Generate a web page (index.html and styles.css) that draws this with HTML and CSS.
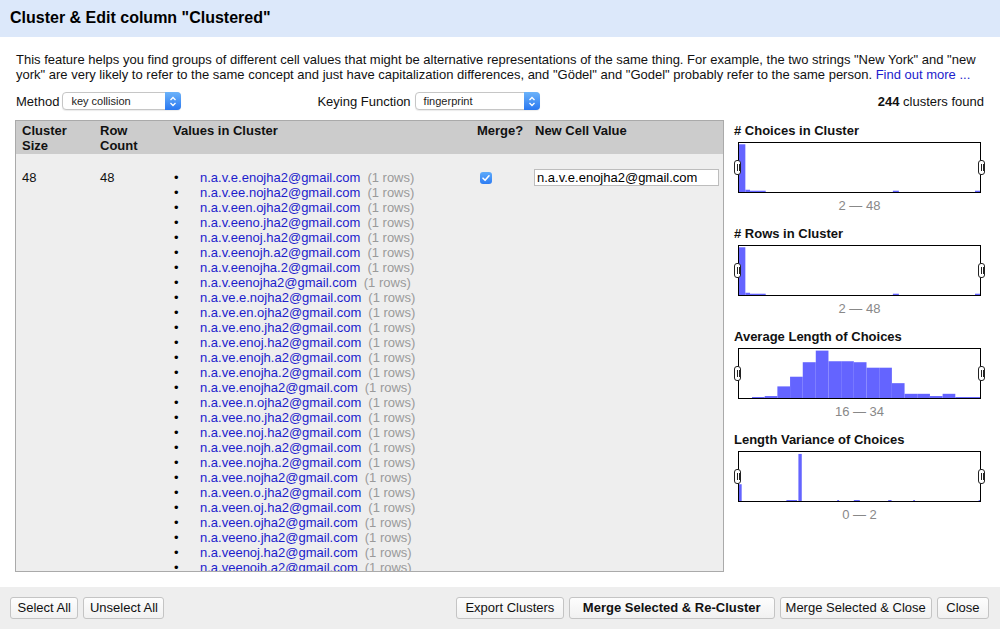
FILE: index.html
```html
<!DOCTYPE html>
<html>
<head>
<meta charset="utf-8">
<link rel="stylesheet" href="styles.css">
</head>
<body>
<div class="dialog">
  <div class="header">Cluster &amp; Edit column "Clustered"</div>
  <div class="body">
    <p class="desc">This feature helps you find groups of different cell values that might be alternative representations of the same thing. For example, the two strings "New York" and "new york" are very likely to refer to the same concept and just have capitalization differences, and "Gödel" and "Godel" probably refer to the same person. <a class="link">Find out more ...</a></p>
    <div class="controls">
      <span class="ctl-label">Method</span>
      <div class="select sel-method">key collision<span class="stepper"><svg width="8" height="11" viewBox="0 0 8 11"><path d="M1.5 4 L4 1.5 L6.5 4 M1.5 7 L4 9.5 L6.5 7" fill="none" stroke="#fff" stroke-width="1.3"/></svg></span></div>
      <span class="ctl-label keying">Keying Function</span>
      <div class="select sel-key">fingerprint<span class="stepper"><svg width="8" height="11" viewBox="0 0 8 11"><path d="M1.5 4 L4 1.5 L6.5 4 M1.5 7 L4 9.5 L6.5 7" fill="none" stroke="#fff" stroke-width="1.3"/></svg></span></div>
      <div class="found"><b>244</b> clusters found</div>
    </div>
    <div class="main">
      <div class="table">
        <div class="grid thead">
          <div class="cell">Cluster<br>Size</div>
          <div class="cell">Row<br>Count</div>
          <div class="cell">Values in Cluster</div>
          <div class="cell">Merge?</div>
          <div class="cell">New Cell Value</div>
        </div>
        <div class="tbody">
          <div class="grid trow">
            <div class="cell">48</div>
            <div class="cell">48</div>
            <div class="cell">
              <ul class="values">
                <li><a class="link">n.a.v.e.enojha2@gmail.com</a><span class="cnt">(1 rows)</span></li>
                <li><a class="link">n.a.v.ee.nojha2@gmail.com</a><span class="cnt">(1 rows)</span></li>
                <li><a class="link">n.a.v.een.ojha2@gmail.com</a><span class="cnt">(1 rows)</span></li>
                <li><a class="link">n.a.v.eeno.jha2@gmail.com</a><span class="cnt">(1 rows)</span></li>
                <li><a class="link">n.a.v.eenoj.ha2@gmail.com</a><span class="cnt">(1 rows)</span></li>
                <li><a class="link">n.a.v.eenojh.a2@gmail.com</a><span class="cnt">(1 rows)</span></li>
                <li><a class="link">n.a.v.eenojha.2@gmail.com</a><span class="cnt">(1 rows)</span></li>
                <li><a class="link">n.a.v.eenojha2@gmail.com</a><span class="cnt">(1 rows)</span></li>
                <li><a class="link">n.a.ve.e.nojha2@gmail.com</a><span class="cnt">(1 rows)</span></li>
                <li><a class="link">n.a.ve.en.ojha2@gmail.com</a><span class="cnt">(1 rows)</span></li>
                <li><a class="link">n.a.ve.eno.jha2@gmail.com</a><span class="cnt">(1 rows)</span></li>
                <li><a class="link">n.a.ve.enoj.ha2@gmail.com</a><span class="cnt">(1 rows)</span></li>
                <li><a class="link">n.a.ve.enojh.a2@gmail.com</a><span class="cnt">(1 rows)</span></li>
                <li><a class="link">n.a.ve.enojha.2@gmail.com</a><span class="cnt">(1 rows)</span></li>
                <li><a class="link">n.a.ve.enojha2@gmail.com</a><span class="cnt">(1 rows)</span></li>
                <li><a class="link">n.a.vee.n.ojha2@gmail.com</a><span class="cnt">(1 rows)</span></li>
                <li><a class="link">n.a.vee.no.jha2@gmail.com</a><span class="cnt">(1 rows)</span></li>
                <li><a class="link">n.a.vee.noj.ha2@gmail.com</a><span class="cnt">(1 rows)</span></li>
                <li><a class="link">n.a.vee.nojh.a2@gmail.com</a><span class="cnt">(1 rows)</span></li>
                <li><a class="link">n.a.vee.nojha.2@gmail.com</a><span class="cnt">(1 rows)</span></li>
                <li><a class="link">n.a.vee.nojha2@gmail.com</a><span class="cnt">(1 rows)</span></li>
                <li><a class="link">n.a.veen.o.jha2@gmail.com</a><span class="cnt">(1 rows)</span></li>
                <li><a class="link">n.a.veen.oj.ha2@gmail.com</a><span class="cnt">(1 rows)</span></li>
                <li><a class="link">n.a.veen.ojha2@gmail.com</a><span class="cnt">(1 rows)</span></li>
                <li><a class="link">n.a.veeno.jha2@gmail.com</a><span class="cnt">(1 rows)</span></li>
                <li><a class="link">n.a.veenoj.ha2@gmail.com</a><span class="cnt">(1 rows)</span></li>
                <li><a class="link">n.a.veenojh.a2@gmail.com</a><span class="cnt">(1 rows)</span></li>
                <li><a class="link">n.a.veenojha.2@gmail.com</a><span class="cnt">(1 rows)</span></li>
                <li><a class="link">n.a.veenojha2@gmail.com</a><span class="cnt">(1 rows)</span></li>
                <li><a class="link">n.av.e.e.nojha2@gmail.com</a><span class="cnt">(1 rows)</span></li>
              </ul>
            </div>
            <div class="cell"><span class="check"><svg width="12" height="12" viewBox="0 0 12 12"><path d="M3 6.2 L5.1 8.3 L9 3.8" fill="none" stroke="#fff" stroke-width="1.6" stroke-linecap="round" stroke-linejoin="round"/></svg></span></div>
            <div class="cell cell-input"><div class="input">n.a.v.e.enojha2@gmail.com</div></div>
          </div>
        </div>
      </div>
      <div class="facets">
        <div class="facet">
          <div class="facet-title"># Choices in Cluster</div>
          <div class="hist">
            <svg class="hist-svg" viewBox="0 0 722 152" preserveAspectRatio="none">
              <rect x="0" y="4" width="19" height="148"/>
              <rect x="19" y="145" width="14" height="7"/>
              <rect x="33" y="148" width="47" height="4"/>
              <rect x="461" y="148" width="18" height="4"/>
              <rect x="707" y="148" width="15" height="4"/>
            </svg>
            <span class="handle left"></span><span class="handle right"></span>
          </div>
          <div class="range">2 — 48</div>
        </div>
        <div class="facet">
          <div class="facet-title"># Rows in Cluster</div>
          <div class="hist">
            <svg class="hist-svg" viewBox="0 0 722 152" preserveAspectRatio="none">
              <rect x="0" y="4" width="19" height="148"/>
              <rect x="19" y="145" width="14" height="7"/>
              <rect x="33" y="148" width="47" height="4"/>
              <rect x="461" y="148" width="18" height="4"/>
              <rect x="707" y="148" width="15" height="4"/>
            </svg>
            <span class="handle left"></span><span class="handle right"></span>
          </div>
          <div class="range">2 — 48</div>
        </div>
        <div class="facet">
          <div class="facet-title">Average Length of Choices</div>
          <div class="hist">
            <svg class="hist-svg" viewBox="0 0 722 152" preserveAspectRatio="none">
              <rect x="39" y="149" width="38" height="3"/>
              <rect x="77" y="146" width="38" height="6"/>
              <rect x="115" y="116" width="38" height="36"/>
              <rect x="153" y="86" width="38" height="66"/>
              <rect x="191" y="41" width="39" height="111"/>
              <rect x="230" y="5" width="38" height="147"/>
              <rect x="268" y="38" width="38" height="114"/>
              <rect x="306" y="38" width="38" height="114"/>
              <rect x="344" y="41" width="38" height="111"/>
              <rect x="382" y="58" width="38" height="94"/>
              <rect x="420" y="58" width="38" height="94"/>
              <rect x="458" y="106" width="38" height="46"/>
              <rect x="496" y="139" width="38" height="13"/>
              <rect x="534" y="139" width="38" height="13"/>
              <rect x="572" y="146" width="38" height="6"/>
              <rect x="610" y="139" width="38" height="13"/>
              <rect x="648" y="149" width="38" height="3"/>
              <rect x="686" y="149" width="36" height="3"/>
            </svg>
            <span class="handle left"></span><span class="handle right"></span>
          </div>
          <div class="range">16 — 34</div>
        </div>
        <div class="facet">
          <div class="facet-title">Length Variance of Choices</div>
          <div class="hist">
            <svg class="hist-svg" viewBox="0 0 722 152" preserveAspectRatio="none">
              <rect x="0" y="100" width="8" height="52"/>
              <rect x="142" y="149" width="32" height="3"/>
              <rect x="178" y="6" width="10" height="146"/>
              <rect x="294" y="149" width="6" height="3"/>
              <rect x="344" y="149" width="18" height="3"/>
              <rect x="447" y="149" width="10" height="3"/>
              <rect x="522" y="149" width="5" height="3"/>
              <rect x="718" y="149" width="4" height="3"/>
            </svg>
            <span class="handle left"></span><span class="handle right"></span>
          </div>
          <div class="range">0 — 2</div>
        </div>
      </div>
    </div>
  </div>
  <div class="footer">
    <div class="btn-group">
      <button class="btn b-select">Select All</button>
      <button class="btn b-unselect">Unselect All</button>
    </div>
    <div class="btn-group">
      <button class="btn b-export">Export Clusters</button>
      <button class="btn primary">Merge Selected &amp; Re-Cluster</button>
      <button class="btn">Merge Selected &amp; Close</button>
      <button class="btn close">Close</button>
    </div>
  </div>
</div>
</body>
</html>
```

FILE: styles.css
```css
* { box-sizing: border-box; }
html, body { margin: 0; padding: 0; background: #fff; }
body {
  font-family: "Liberation Sans", Arial, sans-serif;
  font-size: 13px;
  color: #111;
  width: 1000px;
  height: 629px;
  overflow: hidden;
}
.dialog { width: 1000px; height: 629px; display: flex; flex-direction: column; }
.header {
  height: 37px;
  background: #dce8fa;
  font-size: 16px;
  font-weight: bold;
  padding: 9px 0 0 10px;
  line-height: 18px;
  color: #000;
}
.body { flex: 1; padding: 0 16px 0 15px; display: flex; flex-direction: column; }
.desc {
  margin: 15px 0 0 1px;
  line-height: 15px;
  color: #111;
}
.link { color: #1c1ccc; text-decoration: none; }
.controls {
  margin-top: 10px;
  height: 18px;
  display: flex;
  align-items: center;
  padding-left: 1px;
}
.ctl-label { margin-right: 3px; }
.ctl-label.keying { margin-left: 136px; margin-right: 4px; }
.select {
  position: relative;
  height: 18px;
  border: 1px solid #c6c6c6;
  border-radius: 4px;
  background: #fff;
  font-size: 11px;
  line-height: 16px;
  padding-left: 8px;
  color: #222;
  box-shadow: 0 1px 1px rgba(0,0,0,0.08);
}
.sel-method { width: 119px; }
.sel-key { width: 125px; }
.stepper {
  position: absolute;
  right: -1px;
  top: -1px;
  width: 16px;
  height: 18px;
  border-radius: 0 4px 4px 0;
  background: linear-gradient(#6cb3fa, #2a78f0);
  display: flex;
  align-items: center;
  justify-content: center;
}
.stepper svg { display: block; }
.found { margin-left: auto; }
.main {
  margin-top: 10px;
  height: 452px;
  display: flex;
}
.table {
  width: 710px;
  height: 452px;
  border: 1px solid #aaa;
  background: #eeeeee;
  display: flex;
  flex-direction: column;
  overflow: hidden;
}
.grid {
  display: grid;
  grid-template-columns: 78px 73px 304px 58px 1fr;
}
.cell { padding-left: 6px; }
.thead {
  height: 33px;
  background: #cccccc;
  font-weight: bold;
  line-height: 15px;
  padding-top: 2px;
  color: #111;
}
.tbody { flex: 1; overflow: hidden; }
.trow { padding-top: 16px; line-height: 15px; }
.values { list-style: none; margin: 0; padding: 0; }
.values li { white-space: nowrap; }
.values li::before {
  content: "•";
  display: inline-block;
  width: 26px;
  padding-left: 1px;
  color: #000;
}
.cnt { color: #9a9a9a; margin-left: 7px; }
.check {
  display: inline-block;
  margin: 2px 0 0 3px;
  width: 12px;
  height: 12px;
  border-radius: 3px;
  background: linear-gradient(#5eabfa, #2d7cf3);
  vertical-align: top;
}
.check svg { display: block; }
.cell-input { padding-left: 5px; }
.input {
  width: 185px;
  height: 17px;
  margin-top: -1px;
  border: 1px solid #bdbdbd;
  background: #fff;
  padding-left: 2px;
  line-height: 15px;
  color: #000;
  white-space: nowrap;
  overflow: hidden;
}
.facets { margin-left: 10px; width: 250px; padding-top: 3px; }
.facet { margin-bottom: 13px; }
.facet-title { font-weight: bold; line-height: 15px; color: #111; }
.hist {
  position: relative;
  margin: 4px 0 0 4px;
  width: 243px;
  height: 51px;
  border: 1px solid #000;
  background: #fff;
}
.hist-svg { display: block; width: 241px; height: 49px; fill: #6464ff; }
.handle {
  position: absolute;
  top: 17px;
  width: 7px;
  height: 15px;
  border: 1px solid #222;
  border-radius: 3px;
  background: #fff linear-gradient(90deg, transparent 1.5px, #222 1.5px, #222 2.5px, transparent 2.5px, transparent 3.5px, #222 3.5px, #222 4.5px, transparent 4.5px) no-repeat 0 3px / 100% 7px;
}
.handle.left { left: -5px; }
.handle.right { right: -5px; }
.range {
  margin-top: 5px;
  width: 251px;
  text-align: center;
  color: #888;
  line-height: 15px;
}
.footer {
  margin-top: 15px;
  height: 42px;
  background: #eeeeee;
  display: flex;
  justify-content: space-between;
  align-items: flex-start;
  padding: 10px 11px 0 10px;
}
.btn-group { display: flex; gap: 5px; }
.btn {
  font-family: "Liberation Sans", Arial, sans-serif;
  font-size: 13px;
  color: #111;
  height: 22px;
  padding: 0 5px;
  border: 1px solid #c4c4c4;
  border-radius: 3px;
  background: linear-gradient(#fdfdfd, #f1f1f1);
  line-height: 20px;
}
.btn.b-select { padding: 0 6.5px; }
.btn.b-unselect { padding: 0 5.5px; }
.btn.b-export { padding: 0 8.5px; }
.btn.primary { font-weight: bold; padding: 0 13px; }
.btn.close { padding: 0 8.5px; }
```
